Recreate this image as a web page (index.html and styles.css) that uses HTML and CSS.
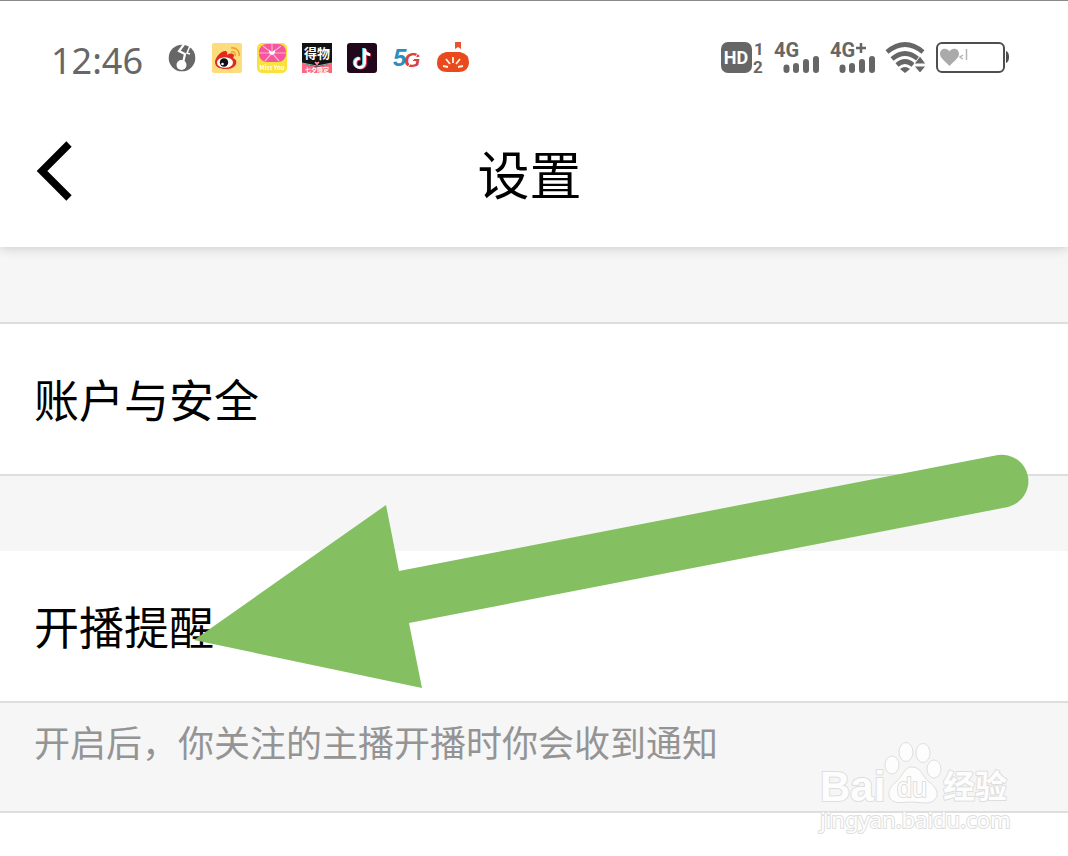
FILE: index.html
```
<!DOCTYPE html>
<html lang="zh-CN">
<head>
    <meta charset="utf-8">
    <title>设置</title>
    <link rel="stylesheet" href="styles.css">
</head>
<body>
    <div class="screen">
        <header class="top">
            <div class="status-bar">
                <span class="time">12:46</span>
                <div class="app-icons">
                    <svg width="30" height="30" viewBox="0 0 30 30">
                        <circle cx="15" cy="15" r="13.300" fill="#676767"/>
                        <path d="M18 0 12 8l6 3-2 9" fill="none" stroke="#fff" stroke-width="2.200"/>
                        <path d="M23 3 20 10l3 1" fill="none" stroke="#fff" stroke-width="1.500"/>
                        <circle cx="14.500" cy="22" r="5" fill="#fff"/>
                    </svg>
                    <svg width="30" height="30" viewBox="0 0 30 30">
                        <rect width="30" height="30" rx="2" fill="#fcdc7c"/>
                        <path d="M3 19C3 14 10 7 14 8c2 1 1 3 1 4 3-2 7-2 7 1l-1 2c3 1 4 3 3 6-2 5-8 5-11 5C8 26 3 24 3 19z" fill="#e12a1d"/>
                        <ellipse cx="13" cy="19.500" rx="8" ry="5.300" fill="#fff"/>
                        <circle cx="12" cy="19.500" r="4.200" fill="#111"/>
                        <circle cx="10.500" cy="21" r="1.300" fill="#fff"/>
                        <path d="M19 9c3-1 5 1 4 4M19 5c5-1 9 3 8 8" fill="none" stroke="#f0a22c" stroke-width="1.600"/>
                    </svg>
                    <svg width="30" height="30" viewBox="0 0 30 30">
                        <rect width="30" height="30" rx="5" fill="#fbe13b"/>
                        <rect x="2" y="1" width="27" height="18" rx="8" fill="#f8559f"/>
                        <path d="M15 10 6 3M15 10l9-7M15 10H2M15 10h14M15 10 8 18M15 10l7 8M15 10V1" stroke="#fbb4cc" stroke-width="1.200"/>
                        <path d="M12 7l3 2 3-2v3l-3 2-3-2z" fill="#fff"/>
                        <text x="15" y="27" class="tiny" text-anchor="middle">Miss You</text>
                    </svg>
                    <svg width="30" height="30" viewBox="0 0 30 30">
                        <rect width="30" height="30" fill="#111"/>
                        <path d="M0 20 15 24 30 20v10H0z" fill="#fa6680"/>
                        <path d="M0 20l15 3 15-3" fill="none" stroke="#78b7b5"/>
                        <path d="M15 22.500l-2.500-3 1-1 1.500 1 1.500-1 1 1z" fill="#ff8ba0"/>
                        <text x="15" y="15" class="dewu" text-anchor="middle">得物</text>
                        <text x="15" y="29" class="tiny" text-anchor="middle">七夕限定</text>
                    </svg>
                    <svg width="30" height="30" viewBox="0 0 30 30">
                        <rect width="30" height="30" rx="3" fill="#22071b"/>
                        <g fill="none" stroke-width="2.800">
                            <path d="M16.500 5v14.500a4.700 4.700 0 1 1-4.700-4.700M16.500 6c0 3 3 5 5.500 5" stroke="#45dce0"/>
                            <path d="M18.500 6v14.500a4.700 4.700 0 1 1-4.700-4.700M18.500 7c0 3 3 5 5.500 5" stroke="#ef3c5c"/>
                            <path d="M17.500 5.500V20a4.700 4.700 0 1 1-4.700-4.700M17.500 6.500c0 3 3 5 5.500 5" stroke="#fff"/>
                        </g>
                    </svg>
                    <svg width="30" height="30" viewBox="0 0 30 30">
                        <text x="1" y="23" class="five">5</text>
                        <text x="12" y="24" class="gee">G</text>
                        <path d="M15 25 27 9" stroke="#fff"/>
                    </svg>
                    <svg width="32" height="32" viewBox="0 0 32 32">
                        <path d="M18 0h6v7l-3-2-3 2z" fill="#e65330"/>
                        <path d="M9 10h14q9 2 9 10c0 7-5 10-10 10H10C4 30 0 27 0 21q0-9 9-11z" fill="#e94a1d"/>
                        <path d="M16 15v6M9 17l4 5M23 17l-4 5M6 24l5 1M26 24l-5 1" stroke="#fff1e0" stroke-width="1.800"/>
                    </svg>
                </div>
                <div class="system-icons">
                    <svg width="43" height="32" viewBox="0 0 43 32">
                        <rect width="31" height="31" y="0" rx="7" fill="#666"/>
                        <text x="15" y="22" class="hd" text-anchor="middle">HD</text>
                        <text x="33" y="13" class="sim">1</text>
                        <text x="32" y="31" class="sim">2</text>
                    </svg>
                    <svg width="46" height="32" viewBox="0 0 46 32">
                        <text x="0" y="15" class="net">4G</text>
                        <path d="M12.500 25.500v2.500M22 24v4M32 20v8M42 17v11" class="bars"/>
                    </svg>
                    <svg width="46" height="32" viewBox="0 0 46 32">
                        <text x="0" y="15" class="net">4G</text>
                        <path d="M31 1v10M26 6h10" stroke="#666" stroke-width="2.500"/>
                        <path d="M12.500 25.500v2.500M22 24v4M32 20v8M42 17v11" class="bars"/>
                    </svg>
                    <svg width="40" height="32" viewBox="0 0 40 32">
                        <g fill="none" stroke="#666" stroke-width="4.600">
                            <path d="M1 10Q19-5 37 10"/>
                            <path d="M6 17q13-11 26 0"/>
                            <path d="M11 23q8-7 16 0"/>
                        </g>
                        <path d="M14 27q5-4 10 0l-5 4z" fill="#666"/>
                        <path d="M34 14l6 8H28zM28 24h12l-6 7z" fill="#666" stroke="#fff" stroke-width="1"/>
                    </svg>
                    <svg width="73" height="32" viewBox="0 0 73 32">
                        <rect x="1" y="1" width="67" height="29" rx="5" fill="#fff" stroke="#4e4e4e" stroke-width="2"/>
                        <path d="M70 9q3 1 3 6t-3 6z" fill="#4e4e4e"/>
                        <path d="M13.500 24C10 20 4 16 4 12c0-6 7-7 9.500-2.500C16 5 23 6 23 12c0 4-6 8-9.500 12z" fill="#aaa"/>
                        <path d="M27 13l-3 2 3 2M30.500 7v11" fill="none" stroke="#b5b5b5" stroke-width="1.500"/>
                    </svg>
                </div>
            </div>
            <div class="nav">
                <button class="back" aria-label="返回">
                    <svg width="36" height="60" viewBox="0 0 36 60">
                        <path d="M32 3 5 30l27 27" fill="none" stroke="#000" stroke-width="7.500"/>
                    </svg>
                </button>
                <h1 class="title">设置</h1>
            </div>
        </header>

        <main class="list">
            <a class="row" href="#account">账户与安全</a>
            <a class="row row-live" href="#live">开播提醒</a>
            <p class="note">开启后，你关注的主播开播时你会收到通知</p>
        </main>

        <svg class="arrow" width="836" height="234" viewBox="0 0 836 234">
            <path d="M0 186 192 51l13 66L804 1a26.500 26.500 0 0 1 10 52L215 169l13 65z" fill="#84c061"/>
        </svg>

        <svg class="watermark" width="194" height="94" viewBox="0 0 194 94">
            <text x="1" y="61" class="wm-bai">Bai</text>
            <g fill="#fdfdfd" stroke="#dedede">
                <ellipse cx="73" cy="25" rx="7" ry="9"/>
                <ellipse cx="87" cy="12" rx="7" ry="9.500"/>
                <ellipse cx="104" cy="13" rx="7" ry="9.500"/>
                <ellipse cx="115" cy="29" rx="7" ry="9"/>
                <path d="M93 27c9 0 10 9 17 15 7 5 10 11 7 16-4 8-15 4-24 4s-18 3-22-4c-3-6 0-11 6-16 7-6 8-15 16-15z"/>
            </g>
            <text x="93" y="57" class="wm-du" text-anchor="middle">du</text>
            <text x="124" y="58" class="wm-cn">经验</text>
            <text x="1" y="88" class="wm-url">jingyan.baidu.com</text>
        </svg>
    </div>
</body>
</html>
```
FILE: styles.css
```
body{
    margin: 0;
    background-color: white;
    color: black;
    font-family: "Noto Sans CJK SC", sans-serif;
}

svg{
    overflow: visible;
}

.screen{
    position: relative;
    min-height: 100vh;
    overflow: hidden;
    box-sizing: border-box;
    border-top: 1px solid #8a8a8a;
}

.top{
    position: relative;
    background-color: white;
    box-shadow: 0 0 12px rgba(0, 0, 0, 0.22);
}

.status-bar{
    display: flex;
    align-items: center;
    height: 114px;
    padding: 0 59px 0 51px;
}

.time{
    font-family: "Noto Sans", sans-serif;
    font-size: 36px;
    color: #676767;
    margin-right: 24px;
    padding-top: 4px;
}

.app-icons{
    display: flex;
    align-items: center;
    gap: 15px;
}

.system-icons{
    display: flex;
    align-items: center;
    gap: 10px;
    margin-left: auto;
}

.tiny{
    font-family: "Noto Sans CJK SC", sans-serif;
    font-size: 6px;
    font-weight: bold;
    fill: white;
}

.dewu{
    font-family: "Noto Sans CJK SC", sans-serif;
    font-size: 13px;
    font-weight: bold;
    fill: white;
}

.five, .gee{
    font-family: "Liberation Sans", sans-serif;
    font-size: 24px;
    font-weight: bold;
    font-style: italic;
    fill: #2a8fc0;
}

.gee{
    font-size: 21px;
    fill: #d8433c;
}

.hd, .sim, .net{
    font-family: Roboto, sans-serif;
    font-weight: bold;
    fill: #666;
}

.hd{
    font-size: 18px;
    fill: white;
}

.sim{
    font-size: 17px;
}

.net{
    font-size: 20px;
}

.bars{
    stroke: #666;
    stroke-width: 6;
    stroke-linecap: round;
}

.nav{
    display: flex;
    align-items: center;
    height: 132px;
    padding: 0 46px 0 37px;
}

.back{
    display: flex;
    padding: 0;
    margin-bottom: 20px;
    border: none;
    background: none;
    cursor: pointer;
}

.title{
    flex: 1;
    margin: 0 36px 16px 0;
    font-size: 52px;
    font-weight: normal;
    line-height: 60px;
    text-align: center;
}

.list{
    padding-top: 75px;
    background-color: #f6f6f6;
}

.row{
    display: block;
    padding: 0 34px;
    border-top: 2px solid #dedede;
    border-bottom: 2px solid #dedede;
    background-color: white;
    color: black;
    font-size: 45px;
    line-height: 150px;
    text-decoration: none;
}

.row-live{
    margin-top: 75px;
    border-top: none;
}

.note{
    margin: 0;
    padding: 10px 34px 42px;
    border-bottom: 2px solid #dedede;
    color: #949494;
    font-size: 36px;
    line-height: 56px;
}

.screen::after{
    content: "";
    display: block;
    height: 40px;
    background-color: white;
}

.arrow{
    position: absolute;
    left: 194px;
    top: 453px;
}

.watermark{
    position: absolute;
    left: 819px;
    top: 739px;
}

.wm-bai, .wm-du, .wm-cn, .wm-url{
    fill: #fdfdfd;
    stroke: #dedede;
    stroke-width: 2;
    stroke-linejoin: round;
    paint-order: stroke;
}

.wm-bai{
    font-family: "Liberation Sans", sans-serif;
    font-size: 42px;
    font-weight: bold;
}

.wm-du{
    font-family: "Liberation Sans", sans-serif;
    font-size: 27px;
}

.wm-cn{
    font-family: "Noto Sans CJK SC", sans-serif;
    font-size: 32px;
    font-weight: bold;
}

.wm-url{
    font-family: "Noto Sans", sans-serif;
    font-size: 22px;
}
```
